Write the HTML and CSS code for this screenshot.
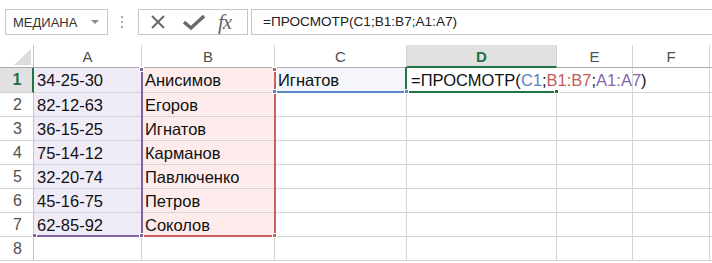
FILE: index.html
```html
<!DOCTYPE html>
<html lang="ru">
<head>
  <meta charset="UTF-8" />
  <title>ПРОСМОТР</title>
  <link rel="stylesheet" href="styles.css">
</head>
<body>
  <div class="toolbar">
    <div class="namebox">
      <span>МЕДИАНА</span>
      <span class="caret"></span>
    </div>
    <div class="grip"><i></i><i></i><i></i></div>
    <div class="fx-buttons">
      <svg class="ico" width="16" height="16" viewBox="0 0 16 16">
        <path d="M2 2 L14 14 M14 2 L2 14" stroke="#6a6a6a" stroke-width="2" fill="none"/>
      </svg>
      <svg class="ico" width="22" height="16" viewBox="0 0 22 16">
        <path d="M1 8 L8 14 L21 2" stroke="#6a6a6a" stroke-width="3.4" fill="none" stroke-linejoin="miter"/>
      </svg>
      <span class="fx">fx</span>
    </div>
    <div class="formula">=ПРОСМОТР(C1;B1:B7;A1:A7)</div>
  </div>

  <div class="sheet">
    <div class="grid">
      <div class="corner"></div>
      <div class="hd">A</div>
      <div class="hd">B</div>
      <div class="hd">C</div>
      <div class="hd active">D</div>
      <div class="hd">E</div>
      <div class="hd">F</div>
      <div class="hd"></div>

      <div class="rh active">1</div>
      <div class="c a">34-25-30</div>
      <div class="c b">Анисимов</div>
      <div class="c lk">Игнатов</div>
      <div class="c edit">=ПРОСМОТР(<span class="r-blue">C1</span>;<span class="r-red">B1:B7</span>;<span class="r-purple">A1:A7</span>)</div>
      <div class="c"></div>
      <div class="c"></div>
      <div class="c"></div>

      <div class="rh">2</div>
      <div class="c a">82-12-63</div>
      <div class="c b">Егоров</div>
      <div class="c"></div><div class="c"></div><div class="c"></div><div class="c"></div><div class="c"></div>

      <div class="rh">3</div>
      <div class="c a">36-15-25</div>
      <div class="c b">Игнатов</div>
      <div class="c"></div><div class="c"></div><div class="c"></div><div class="c"></div><div class="c"></div>

      <div class="rh">4</div>
      <div class="c a">75-14-12</div>
      <div class="c b">Карманов</div>
      <div class="c"></div><div class="c"></div><div class="c"></div><div class="c"></div><div class="c"></div>

      <div class="rh">5</div>
      <div class="c a">32-20-74</div>
      <div class="c b">Павлюченко</div>
      <div class="c"></div><div class="c"></div><div class="c"></div><div class="c"></div><div class="c"></div>

      <div class="rh">6</div>
      <div class="c a">45-16-75</div>
      <div class="c b">Петров</div>
      <div class="c"></div><div class="c"></div><div class="c"></div><div class="c"></div><div class="c"></div>

      <div class="rh">7</div>
      <div class="c a">62-85-92</div>
      <div class="c b">Соколов</div>
      <div class="c"></div><div class="c"></div><div class="c"></div><div class="c"></div><div class="c"></div>

      <div class="rh">8</div>
      <div class="c"></div><div class="c"></div><div class="c"></div><div class="c"></div><div class="c"></div><div class="c"></div><div class="c"></div>
    </div>

    <!-- reference ranges drawn over the grid -->
    <div class="rng rng-purple"></div>
    <div class="rng rng-red"></div>
    <div class="rng rng-blue"></div>
    <div class="rng rng-green"></div>

    <div class="hdl purple" style="left:139px;top:22px"></div>
    <div class="hdl purple" style="left:32px;top:188px"></div>
    <div class="hdl purple" style="left:139px;top:188px"></div>
    <div class="hdl red" style="left:272px;top:22px"></div>
    <div class="hdl red" style="left:272px;top:188px"></div>
    <div class="hdl blue" style="left:272px;top:44px"></div>
    <div class="hdl blue" style="left:404px;top:44px"></div>
    <div class="hdl green" style="left:554px;top:44px"></div>
  </div>
</body>
</html>
```

FILE: styles.css
```css
* { box-sizing: border-box; }
body {
  margin: 0;
  background: #fff;
  font-family: "Liberation Sans", Arial, sans-serif;
  color: #222;
  overflow: hidden;
}

/* formula bar */
.toolbar {
  display: flex;
  align-items: flex-start;
  height: 45px;
  padding: 9px 0 0 5px;
}
.namebox {
  display: flex;
  align-items: center;
  justify-content: space-between;
  width: 103px;
  height: 26px;
  padding: 0 8px 0 7px;
  border: 1px solid #c6c6c6;
  font-size: 13px;
  color: #333;
}
.caret {
  width: 0;
  height: 0;
  border-left: 4px solid transparent;
  border-right: 4px solid transparent;
  border-top: 4px solid #8a8a8a;
}
.grip {
  display: flex;
  flex-direction: column;
  gap: 3px;
  width: 30px;
  padding: 7px 0 0 13px;
}
.grip i {
  display: block;
  width: 2px;
  height: 2px;
  background: #a8a8a8;
}
.fx-buttons {
  display: flex;
  align-items: center;
  width: 110px;
  height: 26px;
  padding: 0 0 0 11px;
  border: 1px solid #c6c6c6;
}
.fx-buttons .ico { margin-right: 17px; }
.fx-buttons .ico + .ico { margin-right: 13px; }
.fx {
  font-family: "Liberation Serif", "DejaVu Serif", serif;
  font-style: italic;
  font-size: 21px;
  line-height: 1;
  color: #666;
  letter-spacing: -1px;
}
.formula {
  flex: 1;
  height: 26px;
  margin-left: 3px;
  padding: 4px 0 0 11px;
  border: 1px solid #c6c6c6;
  border-right: none;
  font-size: 13.6px;
  color: #222;
}

/* sheet */
.sheet { position: relative; }
.grid {
  display: grid;
  grid-template-columns: 34px 108px 133px 132px 150px 76px 77px 1fr;
  grid-template-rows: 23px 25px repeat(7, 24px);
}
.corner {
  position: relative;
  border-right: 1px solid #c4c4c4;
  border-bottom: 1px solid #ababab;
}
.corner::after {
  content: "";
  position: absolute;
  right: 2px;
  bottom: 2px;
  border-left: 17px solid transparent;
  border-bottom: 16px solid #dcdcdc;
}
.hd {
  display: flex;
  align-items: center;
  justify-content: center;
  border-right: 1px solid #d4d4d4;
  border-bottom: 1px solid #ababab;
  font-size: 15px;
  color: #505050;
}
.hd.active {
  background: #e1e1e1;
  border-bottom: 2px solid #217346;
  color: #217346;
  font-weight: bold;
  padding-top: 1px;
}
.rh {
  display: flex;
  align-items: center;
  justify-content: center;
  border-right: 1px solid #c4c4c4;
  border-bottom: 1px solid #d4d4d4;
  font-size: 16px;
  color: #505050;
  padding-left: 2px;
}
.rh.active {
  background: #e1e1e1;
  border-right: 2px solid #217346;
  color: #217346;
  font-weight: bold;
}
.c {
  display: flex;
  align-items: center;
  padding: 1px 0 0 3px;
  border-right: 1px solid #d4d4d4;
  border-bottom: 1px solid #d4d4d4;
  font-size: 16.5px;
  color: #111;
  white-space: nowrap;
}
.c.a { background: #efecf8; }
.c.b { background: #fdeceb; }
.c.lk { background: #f4f6fb; }
.c.edit {
  position: relative;
  z-index: 2;
  border-right: none;
  padding-left: 4px;
}
.r-blue { color: #5683c4; }
.r-red { color: #c55a58; }
.r-purple { color: #8567a8; }

/* range outlines and their corner handles */
.rng { position: absolute; pointer-events: none; }
.rng-purple {
  left: 33px;
  top: 22px;
  width: 110px;
  height: 170px;
  border-right: 2px solid #8064a2;
  border-bottom: 2px solid #8064a2;
  z-index: 4;
}
.rng-red {
  left: 142px;
  top: 22px;
  width: 134px;
  height: 170px;
  border-right: 2px solid #c8625f;
  border-bottom: 2px solid #c8625f;
  z-index: 3;
}
.rng-blue {
  left: 276px;
  top: 22px;
  width: 130px;
  height: 26px;
  border-bottom: 2px solid #5b86c6;
  z-index: 3;
}
.rng-green {
  left: 405px;
  top: 22px;
  width: 151px;
  height: 26px;
  border-left: 2px solid #217346;
  border-bottom: 2px solid #217346;
  z-index: 5;
}
.hdl {
  position: absolute;
  width: 5px;
  height: 5px;
  z-index: 6;
  border: 1px solid #fff;
}
.hdl.purple { background: #8064a2; }
.hdl.red { background: #c8625f; }
.hdl.blue { background: #5b86c6; }
.hdl.green { background: #217346; }
```
